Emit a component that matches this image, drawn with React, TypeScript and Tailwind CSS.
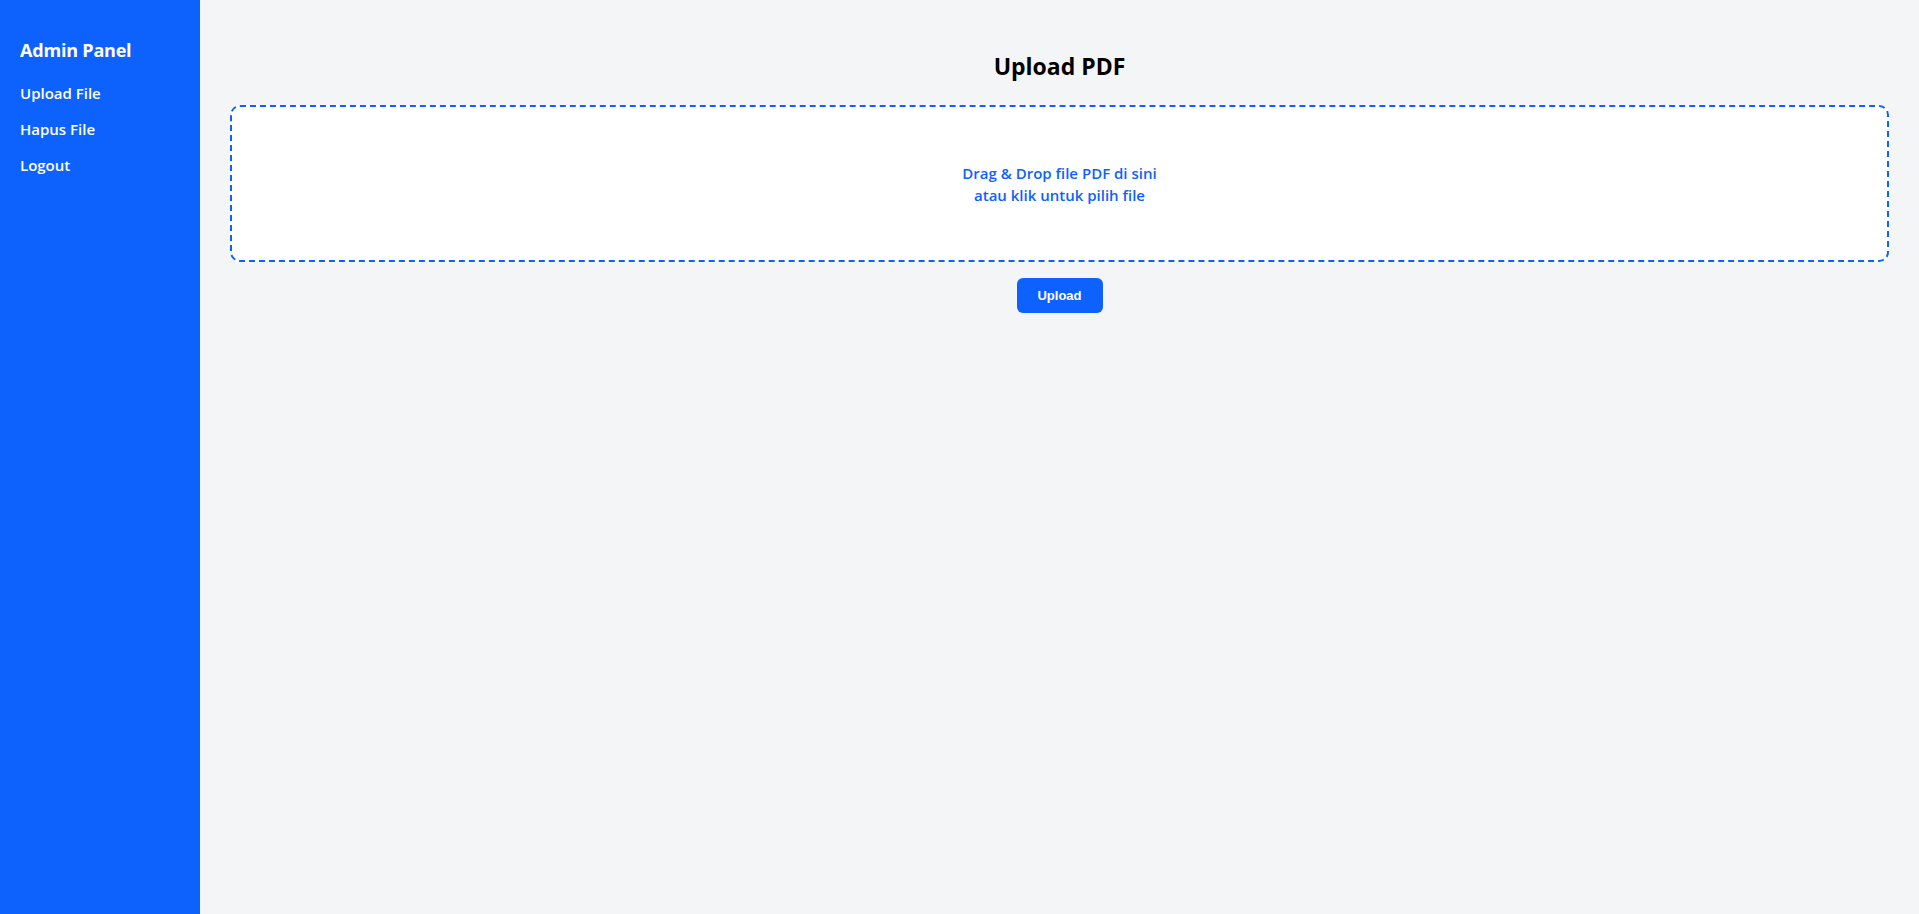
export default function App() {
  return (
    <div className="flex min-h-screen w-full font-['Open_Sans',sans-serif] bg-[#f4f5f7]">
      {/* Sidebar */}
      <aside className="w-[200px] shrink-0 bg-[#0d62fd] px-5 pt-[38px] text-white">
        <h2 className="text-[18px] font-bold leading-6 tracking-[-0.2px]">Admin Panel</h2>
        <nav className="mt-[20px] flex flex-col gap-[14px]">
          <a className="text-[15px] font-semibold leading-[22px]">Upload File</a>
          <a className="text-[15px] font-semibold leading-[22px]">Hapus File</a>
          <a className="text-[15px] font-semibold leading-[22px]">Logout</a>
        </nav>
      </aside>

      {/* Main */}
      <main className="flex-1 px-[30px] pt-[50px]">
        <h1 className="text-center text-[23px] font-bold leading-8 text-black">Upload PDF</h1>
        <div className="mt-[23px] flex h-[157px] cursor-pointer flex-col items-center justify-center rounded-[10px] border-2 border-dashed border-[#0d62fd] bg-white text-center">
          <p className="text-[15px] font-semibold leading-[22px] text-[#0d62fd]">
            Drag &amp; Drop file PDF di sini
            <br />
            atau klik untuk pilih file
          </p>
        </div>
        <div className="mt-4 flex justify-center">
          <button className="h-[35px] w-[86px] rounded-md bg-[#0d62fd] font-['Liberation_Sans',sans-serif] text-[13px] font-bold text-white">
            Upload
          </button>
        </div>
      </main>
    </div>
  );
}
